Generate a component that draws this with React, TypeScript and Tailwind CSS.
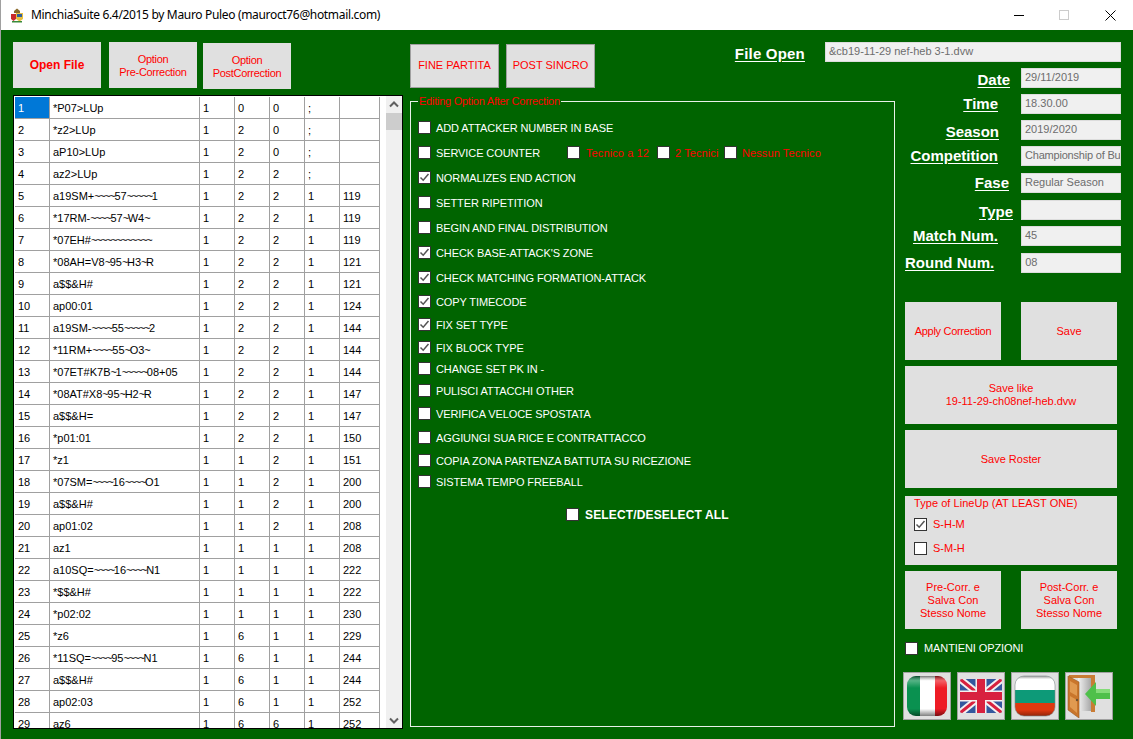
import React from "react";

const rows: string[][] = [
  ["1", "*P07>LUp", "1", "0", "0", ";", ""],
  ["2", "*z2>LUp", "1", "2", "0", ";", ""],
  ["3", "aP10>LUp", "1", "2", "0", ";", ""],
  ["4", "az2>LUp", "1", "2", "2", ";", ""],
  ["5", "a19SM+~~~~57~~~~~1", "1", "2", "2", "1", "119"],
  ["6", "*17RM-~~~~57~W4~", "1", "2", "2", "1", "119"],
  ["7", "*07EH#~~~~~~~~~~~~", "1", "2", "2", "1", "119"],
  ["8", "*08AH=V8~95~H3~R", "1", "2", "2", "1", "121"],
  ["9", "a$$&H#", "1", "2", "2", "1", "121"],
  ["10", "ap00:01", "1", "2", "2", "1", "124"],
  ["11", "a19SM-~~~~55~~~~~2", "1", "2", "2", "1", "144"],
  ["12", "*11RM+~~~~55~O3~", "1", "2", "2", "1", "144"],
  ["13", "*07ET#K7B~1~~~~~08+05", "1", "2", "2", "1", "144"],
  ["14", "*08AT#X8~95~H2~R", "1", "2", "2", "1", "147"],
  ["15", "a$$&H=", "1", "2", "2", "1", "147"],
  ["16", "*p01:01", "1", "2", "2", "1", "150"],
  ["17", "*z1", "1", "1", "2", "1", "151"],
  ["18", "*07SM=~~~~16~~~~O1", "1", "1", "2", "1", "200"],
  ["19", "a$$&H#", "1", "1", "2", "1", "200"],
  ["20", "ap01:02", "1", "1", "2", "1", "208"],
  ["21", "az1", "1", "1", "1", "1", "208"],
  ["22", "a10SQ=~~~~16~~~~N1", "1", "1", "1", "1", "222"],
  ["23", "*$$&H#", "1", "1", "1", "1", "222"],
  ["24", "*p02:02", "1", "1", "1", "1", "230"],
  ["25", "*z6", "1", "6", "1", "1", "229"],
  ["26", "*11SQ=~~~~95~~~~N1", "1", "6", "1", "1", "244"],
  ["27", "a$$&H#", "1", "6", "1", "1", "244"],
  ["28", "ap02:03", "1", "6", "1", "1", "252"],
  ["29", "az6", "1", "6", "6", "1", "252"],
];

function Tildes({ text }: { text: string }) {
  return (
    <>
      {text.split(/(~+)/).map((part, i) =>
        part.startsWith("~") ? (
          <span key={i} className="tracking-[-1.4px]">{part}</span>
        ) : (
          <span key={i}>{part}</span>
        )
      )}
    </>
  );
}

function Check({ on = false }: { on?: boolean }) {
  return (
    <span className="w-[13px] h-[13px] shrink-0 bg-white border border-[#333333] flex items-center justify-center">
      {on && (
        <svg width="11" height="11" viewBox="0 0 11 11">
          <path d="M1.5 5.5 L4.2 8.2 L9.5 2" fill="none" stroke="#555555" strokeWidth="1.5" />
        </svg>
      )}
    </span>
  );
}

function Opt({ label, on = false, cls }: { label: string; on?: boolean; cls: string }) {
  return (
    <div className={`flex items-center h-[13px] ${cls}`}>
      <Check on={on} />
      <span className="ml-[5px] pt-[2px] text-white tracking-[-0.1px] whitespace-nowrap">{label}</span>
    </div>
  );
}

function GrayBtn({ children, cls }: { children: React.ReactNode; cls: string }) {
  return (
    <div className={`bg-[#e0e0e0] text-[#ff0000] flex items-center justify-center text-center leading-[13px] ${cls}`}>
      {children}
    </div>
  );
}

function Field({ label, value, labelCls, rowCls, valueCls = "" }: { label: string; value: string; labelCls: string; rowCls: string; valueCls?: string }) {
  return (
    <div className={`flex items-center justify-end h-[20px] ${rowCls}`}>
      <span className={`text-white font-bold text-[15px] leading-[16px] underline underline-offset-2 whitespace-nowrap ${labelCls}`}>{label}</span>
      <div className={`w-[100px] h-[20px] bg-[#f0f0f0] border border-[#dcdcdc] text-[#6d6d6d] pl-[3px] leading-[16px] overflow-hidden whitespace-nowrap ${valueCls}`}>{value}</div>
    </div>
  );
}

function Italy() {
  return (
    <svg width="42" height="42" viewBox="0 0 42 42">
      <defs>
        <clipPath id="itc"><rect x="1" y="1" width="40" height="40" rx="9" /></clipPath>
        <linearGradient id="itg" x1="0" y1="0" x2="0" y2="1">
          <stop offset="0" stopColor="#000" stopOpacity=".55" />
          <stop offset=".12" stopColor="#fff" stopOpacity=".3" />
          <stop offset=".3" stopColor="#fff" stopOpacity="0" />
          <stop offset=".82" stopColor="#000" stopOpacity="0" />
          <stop offset="1" stopColor="#000" stopOpacity=".5" />
        </linearGradient>
      </defs>
      <g clipPath="url(#itc)">
        <rect x="1" y="1" width="13" height="40" fill="#0a9150" />
        <rect x="14" y="1" width="15" height="40" fill="#ffffff" />
        <rect x="29" y="1" width="12" height="40" fill="#ee1c25" />
        <rect x="1" y="1" width="40" height="40" fill="url(#itg)" />
      </g>
    </svg>
  );
}

function Uk() {
  return (
    <svg width="42" height="34" viewBox="0 0 42 34">
      <defs>
        <clipPath id="ukc"><rect x="0" y="0" width="42" height="34" rx="2" /></clipPath>
      </defs>
      <g clipPath="url(#ukc)">
        <rect width="42" height="34" fill="#34589e" />
        <path d="M0 0 L42 34 M42 0 L0 34" stroke="#f4f0f0" strokeWidth="7" />
        <path d="M0 0 L42 34 M42 0 L0 34" stroke="#d8213f" strokeWidth="3" />
        <path d="M21 0 V34 M0 17 H42" stroke="#f4f0f0" strokeWidth="11" />
        <path d="M21 0 V34 M0 17 H42" stroke="#d8213f" strokeWidth="8" />
      </g>
    </svg>
  );
}

function Bulgaria() {
  return (
    <svg width="42" height="42" viewBox="0 0 42 42">
      <defs>
        <clipPath id="bgc"><rect x="1" y="1" width="40" height="40" rx="9" /></clipPath>
        <linearGradient id="bgg" x1="0" y1="0" x2="0" y2="1">
          <stop offset="0" stopColor="#000" stopOpacity=".4" />
          <stop offset=".08" stopColor="#000" stopOpacity="0" />
          <stop offset=".85" stopColor="#000" stopOpacity="0" />
          <stop offset="1" stopColor="#000" stopOpacity=".35" />
        </linearGradient>
      </defs>
      <g clipPath="url(#bgc)">
        <rect x="1" y="1" width="40" height="14" fill="#ffffff" />
        <rect x="1" y="15" width="40" height="13" fill="#0d9a78" />
        <rect x="1" y="28" width="40" height="13" fill="#e0380f" />
        <rect x="1" y="1" width="40" height="40" fill="url(#bgg)" />
      </g>
      <rect x="1" y="1" width="40" height="40" rx="9" fill="none" stroke="#7d8a8a" strokeWidth="1" opacity=".6" />
    </svg>
  );
}

function Door() {
  return (
    <svg width="46" height="44" viewBox="0 0 46 44">
      <defs>
        <linearGradient id="dg" x1="0" y1="0" x2="1" y2="0">
          <stop offset="0" stopColor="#f2f2f2" />
          <stop offset="1" stopColor="#a8a8a8" />
        </linearGradient>
      </defs>
      <path d="M3 1 H29 V38 H25 V4 H3 Z" fill="#c97c34" />
      <path d="M12 4 H25 V37 L12 37 Z" fill="url(#dg)" />
      <path d="M2 2 L13 8 V44 L2 36 Z" fill="#c9762c" stroke="#9a5a20" strokeWidth=".6" />
      <path d="M4 7 L11 11 V22 L4 18 Z M4 22 L11 26 V39 L4 33 Z" fill="#e09a50" />
      <circle cx="11" cy="26" r="1.2" fill="#6d5030" />
      <path d="M19 20 L30 8 V15 H44 V25 H30 V32 Z" fill="#4fc04a" />
      <path d="M30 15 H44 V19 H30 Z" fill="#84dc78" />
    </svg>
  );
}

function Logo() {
  return (
    <svg width="14" height="15" viewBox="0 0 14 15">
      <path d="M4 3 L7 0.5 L10 3 V5 H4 Z" fill="#8a6a2a" />
      <path d="M1 6 H6 V11 L3.5 13 L1 11 Z" fill="#c92a2a" />
      <path d="M6 5 H13 V11 L9.5 13.5 L6 11 Z" fill="#e8c040" />
      <path d="M7 6 H12 V9 H7 Z" fill="#2f5fa0" />
      <path d="M2 13 H12 V14.5 H2 Z" fill="#3a8a3a" />
    </svg>
  );
}

export default function App() {
  return (
    <div className="w-[1133px] h-[739px] overflow-hidden flex flex-col font-['Liberation_Sans',sans-serif] text-[11px]">
      <div className="h-[30px] bg-white flex items-center shrink-0 border-l border-[#a0a0a0]">
        <span className="ml-[9px] mr-[7px] flex"><Logo /></span>
        <span className="font-['Noto_Sans',sans-serif] text-[12px] tracking-[-0.33px] text-black whitespace-nowrap">MinchiaSuite 6.4/2015 by Mauro Puleo (mauroct76@hotmail.com)</span>
        <div className="ml-auto flex h-full">
          <div className="w-[46px] flex items-center justify-center pl-px">
            <svg width="10" height="10" viewBox="0 0 10 10"><path d="M0 5.5 H10" stroke="#000" strokeWidth="1" /></svg>
          </div>
          <div className="w-[46px] flex items-center justify-center">
            <svg width="10" height="10" viewBox="0 0 10 10"><rect x=".5" y=".5" width="9" height="9" fill="none" stroke="#cccccc" /></svg>
          </div>
          <div className="w-[46px] flex items-center justify-center">
            <svg width="11" height="11" viewBox="0 0 11 11"><path d="M.5 .5 L10.5 10.5 M10.5 .5 L.5 10.5" stroke="#000" strokeWidth="1" /></svg>
          </div>
        </div>
      </div>

      <div className="flex-1 bg-[#006400] flex pl-[12px] pt-[12px] border-l border-[#a0a0a0]">
        {/* left column */}
        <div className="w-[390px] shrink-0 flex flex-col">
          <div className="flex h-[47px] items-start mb-[6px]">
            <GrayBtn cls="w-[88px] h-[46px] font-bold text-[12px]">Open File</GrayBtn>
            <GrayBtn cls="w-[88px] h-[46px] ml-[8px] pt-[2px] tracking-[-0.3px]">Option<br />Pre-Correction</GrayBtn>
            <GrayBtn cls="w-[88px] h-[46px] ml-[6px] mt-[1px] pt-[2px] tracking-[-0.3px]">Option<br />PostCorrection</GrayBtn>
          </div>
          <div className="h-[634px] bg-white border border-black flex overflow-hidden text-black">
            <div className="w-[372px] shrink-0 pl-px pt-px">
              {rows.map((r, i) => (
                <div key={i} className="grid grid-cols-[35px_150px_35px_35px_35px_35px_40px] h-[22px] w-[365px] border-b border-[#a0a0a0] leading-[23px]">
                  {r.map((c, j) => (
                    <div key={j} className={`pl-[3px] border-r border-[#a0a0a0] overflow-hidden whitespace-nowrap ${i === 0 && j === 0 ? "bg-[#0078d7] text-white" : ""}`}>
                      {j === 1 ? <Tildes text={c} /> : c}
                    </div>
                  ))}
                </div>
              ))}
            </div>
            <div className="w-[16px] shrink-0 bg-[#f0f0f0] flex flex-col items-center">
              <svg className="mt-[5px]" width="10" height="7" viewBox="0 0 10 7"><path d="M1 5.5 L5 1.5 L9 5.5" fill="none" stroke="#606060" strokeWidth="2" /></svg>
              <div className="w-full h-[17px] bg-[#cdcdcd] mt-[5px]" />
              <svg className="mt-auto mb-[4px]" width="10" height="7" viewBox="0 0 10 7"><path d="M1 1.5 L5 5.5 L9 1.5" fill="none" stroke="#606060" strokeWidth="2" /></svg>
            </div>
          </div>
        </div>

        {/* middle and right */}
        <div className="ml-[7px] grid grid-cols-[415px_80px_216px] grid-rows-[20px_39px_626px] h-[685px]">
          <div className="col-start-1 row-start-1 row-span-2 flex items-start">
            <div className="w-[89px] h-[44px] mt-[2px] pb-[2px] bg-[#e0e0e0] border border-[#a0a0a0] text-[#ff0000] flex items-center justify-center">FINE PARTITA</div>
            <div className="w-[89px] h-[44px] mt-[2px] ml-[7px] pb-[2px] bg-[#e0e0e0] border border-[#a0a0a0] text-[#ff0000] flex items-center justify-center">POST SINCRO</div>
            <span className="ml-auto mr-[20px] mt-[4px] text-white font-bold text-[15px] leading-[16px] tracking-[0.2px] underline underline-offset-2">File Open</span>
          </div>
          <div className="col-start-2 col-span-2 row-start-1 w-[296px] h-[20px] bg-[#f0f0f0] border border-[#dcdcdc] text-[#6d6d6d] pl-[3px] leading-[16px] whitespace-nowrap">&amp;cb19-11-29 nef-heb 3-1.dvw</div>

          <div className="col-start-1 col-span-2 row-start-3 relative w-[485px] h-[626px] border border-[#e8f0e8] pl-[7px] pt-[19px]">
            <span className="absolute left-[7px] top-[-7px] bg-[#006400] px-px text-[#ff0000] tracking-[-0.25px] leading-[13px] whitespace-nowrap">Editing Option After Correction</span>
            <Opt label="ADD ATTACKER NUMBER IN BASE" cls="" />
            <div className="flex items-center h-[13px] mt-[12px]">
              <Opt label="SERVICE COUNTER" cls="w-[149px]" />
              <div className="flex items-center w-[90px]"><Check /><span className="ml-[6px] pt-[2px] text-[#ff0000] tracking-[0.1px] whitespace-nowrap">Tecnico a 12</span></div>
              <div className="flex items-center w-[67px]"><Check /><span className="ml-[5px] pt-[2px] text-[#ff0000] tracking-[0.1px] whitespace-nowrap">2 Tecnici</span></div>
              <div className="flex items-center"><Check /><span className="ml-[5px] pt-[2px] text-[#ff0000] tracking-[0.1px] whitespace-nowrap">Nessun Tecnico</span></div>
            </div>
            <Opt label="NORMALIZES END ACTION" on cls="mt-[12px]" />
            <Opt label="SETTER RIPETITION" cls="mt-[12px]" />
            <Opt label="BEGIN AND FINAL DISTRIBUTION" cls="mt-[12px]" />
            <Opt label="CHECK BASE-ATTACK'S ZONE" on cls="mt-[12px]" />
            <Opt label="CHECK MATCHING FORMATION-ATTACK" on cls="mt-[12px]" />
            <Opt label="COPY TIMECODE" on cls="mt-[11px]" />
            <Opt label="FIX SET TYPE" on cls="mt-[10px]" />
            <Opt label="FIX BLOCK TYPE" on cls="mt-[10px]" />
            <Opt label="CHANGE SET PK IN -" cls="mt-[8px]" />
            <Opt label="PULISCI ATTACCHI OTHER" cls="mt-[9px]" />
            <Opt label="VERIFICA VELOCE SPOSTATA" cls="mt-[10px]" />
            <Opt label="AGGIUNGI SUA RICE E CONTRATTACCO" cls="mt-[11px]" />
            <Opt label="COPIA ZONA PARTENZA BATTUTA SU RICEZIONE" cls="mt-[10px]" />
            <Opt label="SISTEMA TEMPO FREEBALL" cls="mt-[8px]" />
            <div className="flex items-center h-[13px] mt-[20px] ml-[148px]">
              <Check />
              <span className="ml-[6px] text-white font-bold text-[12px] tracking-[0.15px] whitespace-nowrap">SELECT/DESELECT ALL</span>
            </div>
          </div>

          <div className="col-start-3 row-start-2 row-span-2 pt-[6px] flex flex-col">
            <Field label="Date" value="29/11/2019" labelCls="mr-[11px] pt-[4px]" rowCls="mb-[6px]" />
            <Field label="Time" value="18.30.00" labelCls="mr-[23px]" rowCls="mb-[6px]" />
            <Field label="Season" value="2019/2020" labelCls="mr-[22px] pt-[4px]" rowCls="mb-[6px]" />
            <Field label="Competition" value="Championship of Bu" labelCls="mr-[23px] text-[14.7px]" rowCls="mb-[7px]" valueCls="tracking-[-0.2px]" />
            <Field label="Fase" value="Regular Season" labelCls="mr-[12px]" rowCls="mb-[7px]" />
            <Field label="Type" value="" labelCls="mr-[8px] pt-[4px]" rowCls="mb-[6px]" />
            <Field label="Match Num." value="45" labelCls="mr-[23px]" rowCls="mb-[7px]" />
            <Field label="Round Num." value="08" labelCls="mr-[27px]" rowCls="" />

            <div className="mt-[29px] flex gap-[20px]">
              <GrayBtn cls="w-[96px] h-[58px] tracking-[-0.3px]">Apply Correction</GrayBtn>
              <GrayBtn cls="w-[96px] h-[58px]">Save</GrayBtn>
            </div>
            <GrayBtn cls="w-[212px] h-[58px] mt-[6px]">Save like<br />19-11-29-ch08nef-heb.dvw</GrayBtn>
            <GrayBtn cls="w-[212px] h-[58px] mt-[6px]">Save Roster</GrayBtn>
            <div className="w-[212px] h-[69px] mt-[8px] bg-[#e0e0e0] text-[#ff0000] pl-[9px] pt-px leading-[13px]">
              <div className="tracking-[0.05px]">Type of LineUp (AT LEAST ONE)</div>
              <div className="flex items-center mt-[8px]"><Check on /><span className="ml-[6px]">S-H-M</span></div>
              <div className="flex items-center mt-[11px]"><Check /><span className="ml-[6px]">S-M-H</span></div>
            </div>
            <div className="mt-[6px] flex gap-[20px]">
              <GrayBtn cls="w-[96px] h-[58px]"><span>Pre-Corr. e<br />Salva Con<br />Stesso Nome</span></GrayBtn>
              <GrayBtn cls="w-[96px] h-[58px]"><span>Post-Corr. e<br />Salva Con<br />Stesso Nome</span></GrayBtn>
            </div>
            <div className="mt-[13px] flex items-center h-[13px]">
              <Check />
              <span className="ml-[6px] text-white tracking-[-0.1px] whitespace-nowrap">MANTIENI OPZIONI</span>
            </div>
            <div className="mt-[17px] ml-[-2px] flex gap-[6px]">
              <div className="w-[48px] h-[48px] bg-[#e0e0e0] border border-[#a0a0a0] flex items-center justify-center"><Italy /></div>
              <div className="w-[48px] h-[48px] bg-[#e0e0e0] border border-[#a0a0a0] flex items-center justify-center"><Uk /></div>
              <div className="w-[48px] h-[48px] bg-[#e0e0e0] border border-[#a0a0a0] flex items-center justify-center"><Bulgaria /></div>
              <div className="w-[48px] h-[48px] bg-[#e0e0e0] border border-[#a0a0a0] flex items-center justify-center"><Door /></div>
            </div>
          </div>
        </div>
      </div>
    </div>
  );
}
